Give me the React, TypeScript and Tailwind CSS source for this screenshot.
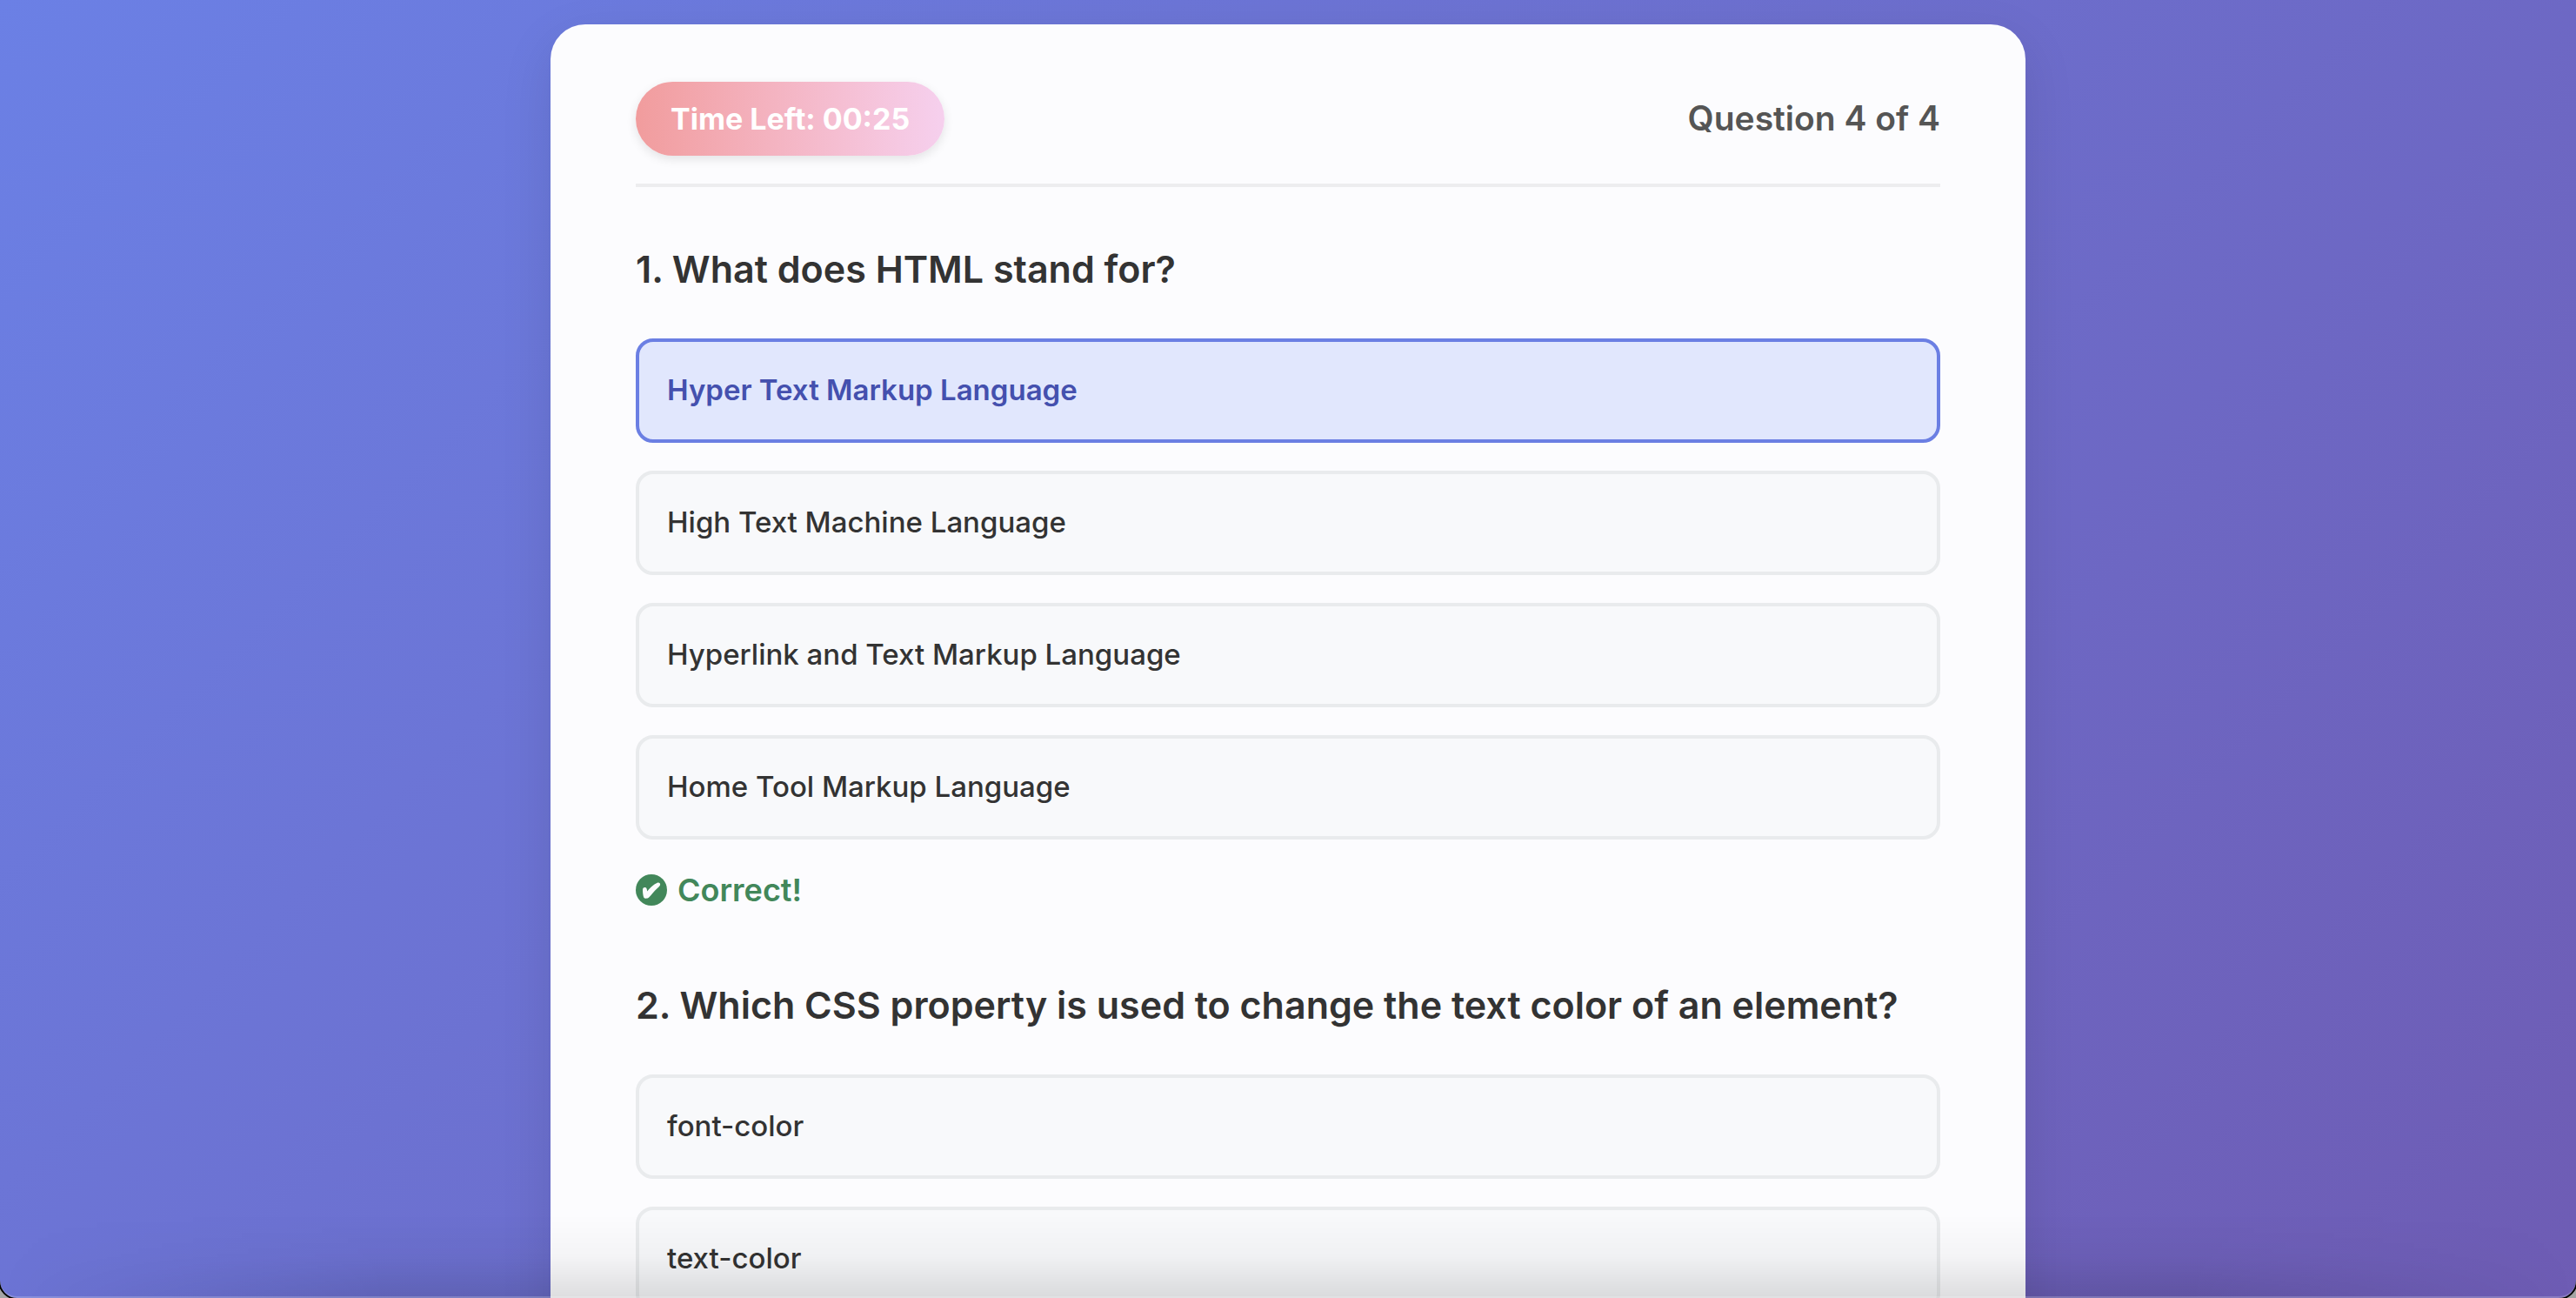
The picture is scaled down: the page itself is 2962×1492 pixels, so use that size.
type Question = {
  title: string;
  options: string[];
  selected?: number;
  correct?: boolean;
};

const questions: Question[] = [
  {
    title: "1. What does HTML stand for?",
    options: [
      "Hyper Text Markup Language",
      "High Text Machine Language",
      "Hyperlink and Text Markup Language",
      "Home Tool Markup Language",
    ],
    selected: 0,
    correct: true,
  },
  {
    title: "2. Which CSS property is used to change the text color of an element?",
    options: ["font-color", "text-color"],
  },
];

function CheckBadge() {
  return (
    <svg viewBox="0 0 36 36" className="size-9 shrink-0" aria-hidden="true">
      <circle cx="18" cy="18" r="18" fill="#42875a" />
      <path
        d="M8 18.6C7.9 16 8.8 15 10.4 15C12.4 15 12.8 16.3 13.2 19.6C16.6 15.4 20.4 11.6 24.4 9.9C26.8 9 28.6 10.2 28 12.4C27.6 13.6 26.2 14.6 24.6 16.2C21 19.6 18 23.4 15.2 26.6C13.6 28.2 10 28.2 9.2 26.4C8.4 24.6 8.1 21.6 8 18.6Z"
        fill="#fcfcfe"
      />
    </svg>
  );
}

function Option({ label, selected }: { label: string; selected: boolean }) {
  return (
    <button
      type="button"
      aria-pressed={selected}
      className={
        selected
          ? "h-30 w-full rounded-[20px] border-4 border-[#6b7fe3] bg-[#e1e7fd] px-8 text-left text-[33px] font-semibold text-[#4450ae]"
          : "h-30 w-full rounded-[20px] border-4 border-[#e9ebed] bg-[#f8f9fb] px-8 text-left text-[33px] font-medium text-[#333333]"
      }
    >
      {label}
    </button>
  );
}

function QuestionBlock({ question }: { question: Question }) {
  return (
    <section>
      <h2 className="text-[43px] leading-16 font-semibold text-[#333333]">{question.title}</h2>
      <div className="mt-12 flex flex-col gap-8">
        {question.options.map((label, i) => (
          <Option key={label} label={label} selected={question.selected === i} />
        ))}
      </div>
      {question.correct && (
        <p className="mt-8 flex h-13 items-center gap-3 text-[36px] font-semibold text-[#42875a]">
          <CheckBadge />
          Correct!
        </p>
      )}
    </section>
  );
}

export default function App() {
  return (
    <div className="h-screen overflow-hidden bg-[#a5a5a5] font-['Inter',sans-serif]">
      <div className="relative h-full overflow-hidden rounded-b-[20px] bg-[linear-gradient(135deg,#6b80e5_0%,#6e5cb4_100%)] px-8 pt-7 outline-2 outline-black">
        <main className="mx-auto max-w-[1696px] rounded-[40px] bg-[#fcfcfe] px-[98px] pt-[66px] pb-24 shadow-[0_20px_60px_rgba(0,0,0,0.1)]">
          <header className="flex items-center justify-between border-b-4 border-[#ededef] pb-8">
            <div className="flex h-[85px] items-center rounded-full bg-linear-to-r from-[#f19c9d] to-[#f6d0ee] px-10 text-[34px] font-bold text-white shadow-[0_4px_12px_rgba(0,0,0,0.1)]">
              Time Left: 00:25
            </div>
            <div className="text-[39px] font-semibold text-[#555555]">Question 4 of 4</div>
          </header>
          <div className="mt-[62px] flex flex-col gap-[74px]">
            {questions.map((q) => (
              <QuestionBlock key={q.title} question={q} />
            ))}
          </div>
        </main>
        <div className="pointer-events-none absolute inset-x-0 bottom-0 h-24 bg-[linear-gradient(to_top,rgba(0,0,0,0.12),rgba(0,0,0,0.03)_50%,transparent)] mask-x-from-85% mask-x-to-100%" />
        <div className="pointer-events-none absolute inset-0 rounded-b-[20px] border-b-2 border-white/20" />
      </div>
    </div>
  );
}
